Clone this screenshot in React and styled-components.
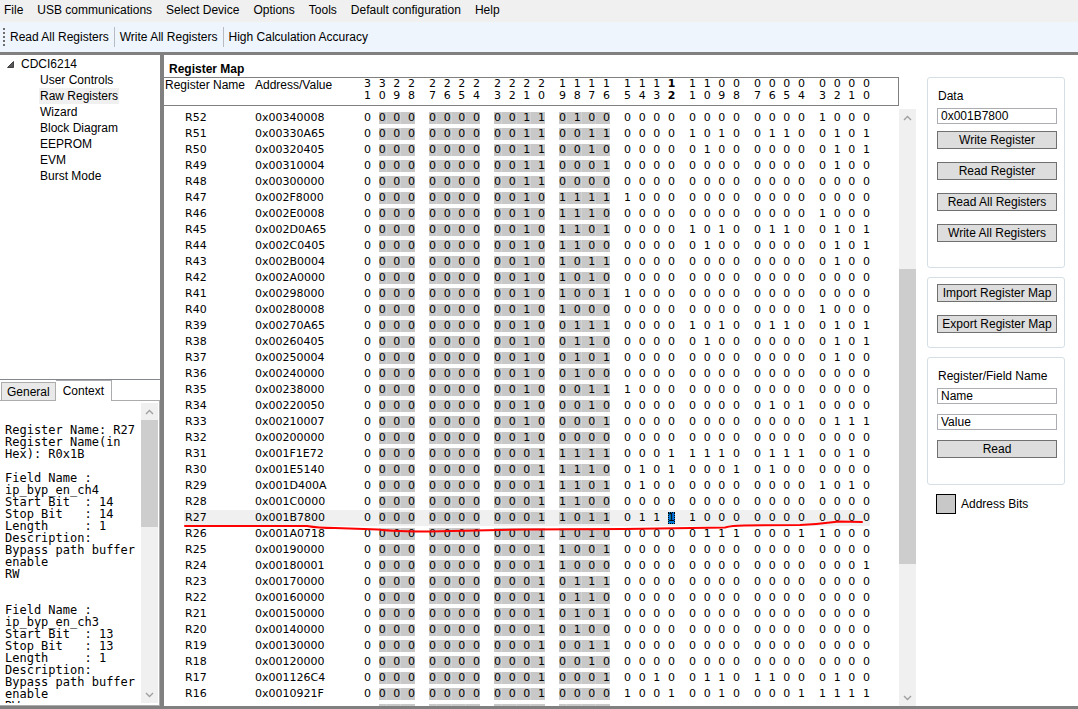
import { useState } from "react";
import styled, { createGlobalStyle } from "styled-components";

const GlobalStyle = createGlobalStyle`
  * {
    box-sizing: border-box;
  }
  body {
    margin: 0;
    background: #ffffff;
    color: #000000;
    font: 12px/16px "Liberation Sans", Arial, sans-serif;
  }
  button, input {
    font: inherit;
    color: inherit;
  }
`;

const Page = styled.div`
  display: flex;
  flex-direction: column;
  height: 100vh;
  overflow: hidden;
`;

const MenuBar = styled.nav`
  display: flex;
  flex: none;
  height: 22px;
  padding: 2px 4px 0;
  gap: 14px;
  background: #f0f0f0;
`;

const PlainButton = styled.button`
  padding: 0;
  border: 0;
  background: none;
  white-space: nowrap;
  line-height: 16px;
`;

const MenuItem = styled(PlainButton)`
  height: 16px;
`;

const ToolBar = styled.div`
  display: flex;
  flex: none;
  align-items: center;
  height: 30px;
  padding-left: 3px;
  background: #eef5fd;
`;

const Grip = styled.span`
  width: 2px;
  height: 18px;
  margin-right: 5px;
  background: repeating-linear-gradient(#6d6d6d 0 2px, transparent 2px 4px);
`;

const ToolButton = styled(PlainButton)`
  height: 20px;
  padding-right: 5px;
  & + & {
    padding-left: 5px;
    border-left: 1px solid #b8bcc2;
  }
`;

const Workspace = styled.div`
  display: flex;
  flex: 1;
  min-height: 0;
  border-top: 3px solid #808080;
  border-bottom: 3px solid #808080;
`;

const Sidebar = styled.aside`
  display: flex;
  flex: none;
  flex-direction: column;
  width: 164px;
  border-right: 4px solid #808080;
`;

const Tree = styled.div`
  flex: none;
  height: 325px;
  border-bottom: 1px solid #828790;
`;

const TreeRoot = styled.div`
  display: flex;
  align-items: center;
  height: 16px;
  margin-top: 1px;
  padding-left: 7px;
  gap: 7px;
`;

const TreeList = styled.ul`
  margin: 0;
  padding: 0 0 0 39px;
  list-style: none;
`;

const TreeItem = styled.li`
  width: fit-content;
  padding: 0 1px;
  background: ${({ $selected }) => ($selected ? "#f0f0f0" : "transparent")};
`;

const Tabs = styled.div`
  display: flex;
  flex: none;
  align-items: flex-end;
  height: 21px;
  padding-left: 1px;
  border-bottom: 1px solid #acacac;
`;

const Tab = styled(PlainButton)`
  height: ${({ $active }) => ($active ? "21px" : "18px")};
  margin-bottom: ${({ $active }) => ($active ? "-1px" : "0")};
  padding: 0 ${({ $active }) => ($active ? "7px" : "5px")};
  border: 1px solid #acacac;
  border-bottom: 0;
  border-left-width: ${({ $active }) => ($active ? "0" : "1px")};
  background: ${({ $active }) => ($active ? "#ffffff" : "#e9e9e9")};
`;

const ContextPanel = styled.div`
  display: flex;
  flex: 1;
  min-height: 0;
  padding: 2px 1px 2px 5px;
  border-right: 1px solid #acacac;
  border-bottom: 1px solid #acacac;
`;

const ContextText = styled.pre`
  flex: 1;
  margin: 0;
  padding-top: 21px;
  overflow: hidden;
  font: 12px/12px "DejaVu Sans Mono", monospace;
`;

const ScrollTrack = styled.div`
  display: flex;
  flex: none;
  flex-direction: column;
  width: 17px;
  background: #f0f0f0;
`;

const ScrollButton = styled.button`
  display: grid;
  flex: none;
  place-items: center;
  height: 17px;
  padding: 0;
  border: 0;
  background: none;
`;

const ScrollSpace = styled.div`
  flex: ${({ $grow }) => $grow} 0 0;
`;

const ScrollThumb = styled(ScrollSpace)`
  background: #cdcdcd;
`;

const Main = styled.main`
  display: flex;
  flex: 1;
  flex-direction: column;
  min-width: 0;
`;

const Title = styled.h1`
  flex: none;
  margin: 0;
  padding: 7px 0 0 5px;
  font-size: 12px;
  line-height: 15px;
`;

const MapArea = styled.div`
  display: flex;
  flex: 1;
  min-height: 0;
`;

const MapColumn = styled.section`
  display: flex;
  flex-direction: column;
  width: 752px;
`;

const HeaderBox = styled.div`
  flex: none;
  width: 735px;
  height: 29px;
  border: 1px solid #808080;
  border-left: 0;
`;

const RowsArea = styled.div`
  display: flex;
  flex: 1;
  min-height: 0;
  margin-top: 3px;
`;

const RowsView = styled.div`
  position: relative;
  flex: 1;
  padding-top: 1px;
  overflow: hidden;
`;

const RegisterTable = styled.table`
  table-layout: fixed;
  width: 720px;
  border-collapse: collapse;
  font: 11px/16px "DejaVu Sans", Verdana, sans-serif;
`;

const HeadCell = styled.th`
  padding: 0;
  font: 12px/14px "Liberation Sans", Arial, sans-serif;
  text-align: left;
  vertical-align: top;
  white-space: nowrap;
  &:first-child {
    padding-left: 1px;
  }
`;

const BitHeadCell = styled.th`
  padding: 0;
  font: 11px/12px "DejaVu Sans", Verdana, sans-serif;
  vertical-align: top;
`;

const Row = styled.tr`
  height: 16px;
  background: ${({ $selected }) =>
    $selected
      ? "linear-gradient(90deg, #ffffff 20px, #f0f0f0 20px 706px, #ffffff 706px)"
      : "none"};
`;

const NameCell = styled.td`
  padding: 0 0 0 21px;
`;

const Cell = styled.td`
  padding: 0;
`;

const Nibble = styled.div`
  display: grid;
  grid-template-columns: 7px 1fr 7px 1fr 7px 1fr 7px;
  width: 51px;
`;

const Bit = styled.span`
  height: 12px;
  line-height: 12px;
  text-align: center;
  background: ${({ $address, $selected }) =>
    $selected ? "#0078d7" : $address ? "#c8c8c8" : "none"};
  outline: ${({ $selected }) => ($selected ? "1px dotted #000000" : "none")};
  outline-offset: -1px;
`;

const Gap = styled.span`
  background: ${({ $address }) => ($address ? "#c8c8c8" : "none")};
  border-left: 1px solid ${({ $address }) => ($address ? "#d3d3d3" : "transparent")};
`;

const BitNumber = styled.span`
  display: flex;
  flex-direction: column;
  align-items: center;
  font-weight: ${({ $selected }) => ($selected ? "bold" : "normal")};
`;

const Marker = styled.svg`
  position: absolute;
  top: 400px;
  left: 20px;
  width: 680px;
  height: 26px;
`;

const Controls = styled.aside`
  display: flex;
  flex-direction: column;
  width: 138px;
  margin-left: 11px;
`;

const Group = styled.form`
  display: flex;
  flex-direction: column;
  margin-bottom: 9px;
  padding: ${({ $top }) => $top}px 7px ${({ $bottom }) => $bottom}px 9px;
  border: 1px solid #d5dfe5;
  border-radius: 3px;
`;

const FieldLabel = styled.label`
  margin-bottom: 4px;
  padding-left: 1px;
`;

const TextBox = styled.input`
  width: 100%;
  height: 16px;
  padding: 0 3px;
  border: 1px solid #abadb3;
  background: #ffffff;
  line-height: 14px;
  & + div {
    margin-top: 7px;
  }
`;

const ButtonStack = styled.div`
  display: flex;
  flex-direction: column;
  gap: 13px;
`;

const PushButton = styled.button`
  height: 18px;
  padding: 0;
  border: 1px solid #707070;
  background: #dddddd;
  line-height: 16px;
  white-space: nowrap;
`;

const Fields = styled.div`
  display: flex;
  flex-direction: column;
  gap: 10px;
`;

const Legend = styled.div`
  display: flex;
  align-items: center;
  gap: 5px;
  padding-left: 9px;
`;

const Swatch = styled.span`
  width: 20px;
  height: 20px;
  border: 1px solid #000000;
  background: #c8c8c8;
`;

const menus = [
  "File",
  "USB communications",
  "Select Device",
  "Options",
  "Tools",
  "Default configuration",
  "Help",
];

const pages = [
  "User Controls",
  "Raw Registers",
  "Wizard",
  "Block Diagram",
  "EEPROM",
  "EVM",
  "Burst Mode",
];

// registers from R52 down to R16
const values = [
  "00340008", "00330A65", "00320405", "00310004", "00300000", "002F8000",
  "002E0008", "002D0A65", "002C0405", "002B0004", "002A0000", "00298000",
  "00280008", "00270A65", "00260405", "00250004", "00240000", "00238000",
  "00220050", "00210007", "00200000", "001F1E72", "001E5140", "001D400A",
  "001C0000", "001B7800", "001A0718", "00190000", "00180001", "00170000",
  "00160000", "00150000", "00140000", "00130000", "00120000", "001126C4",
  "0010921F",
];

const contextText = `Register Name: R27
Register Name(in
Hex): R0x1B

Field Name :
ip_byp_en_ch4
Start Bit  : 14
Stop Bit   : 14
Length     : 1
Description:
Bypass path buffer
enable
RW


Field Name :
ip_byp_en_ch3
Start Bit  : 13
Stop Bit   : 13
Length     : 1
Description:
Bypass path buffer
enable
RW`;

const nibbles = [7, 6, 5, 4, 3, 2, 1, 0];
const places = [3, 2, 1, 0];

const isAddress = (bit) => bit > 15 && bit < 31;

function Columns() {
  return (
    <colgroup>
      <col style={{ width: 91 }} />
      <col style={{ width: 109 }} />
      {nibbles.map((nibble) => (
        <col key={nibble} style={{ width: 65 }} />
      ))}
    </colgroup>
  );
}

function BitCells({ digits, selectedBit, onSelect }) {
  return nibbles.map((nibble, index) => (
    <Cell key={nibble}>
      <Nibble>
        {places.map((place) => {
          const bit = nibble * 4 + place;
          const text = digits ? (parseInt(digits[index], 16) >> place) & 1 : "";
          return [
            <Bit
              key={bit}
              $address={isAddress(bit)}
              $selected={bit === selectedBit}
              onClick={() => onSelect?.(bit)}
            >
              {text}
            </Bit>,
            place > 0 && <Gap key={"gap" + bit} $address={isAddress(bit)} />,
          ];
        })}
      </Nibble>
    </Cell>
  ));
}

function ScrollBar({ before, thumb, after }) {
  return (
    <ScrollTrack>
      <ScrollButton type="button" aria-label="Scroll up">
        <svg width="9" height="6" viewBox="0 0 9 6" fill="none" stroke="#a0a0a0" strokeWidth="1.4">
          <path d="M1 5 4.5 1.5 8 5" />
        </svg>
      </ScrollButton>
      <ScrollSpace $grow={before} />
      <ScrollThumb $grow={thumb} />
      <ScrollSpace $grow={after} />
      <ScrollButton type="button" aria-label="Scroll down">
        <svg width="9" height="6" viewBox="0 0 9 6" fill="none" stroke="#a0a0a0" strokeWidth="1.4">
          <path d="M1 1 4.5 4.5 8 1" />
        </svg>
      </ScrollButton>
    </ScrollTrack>
  );
}

export default function App() {
  const [page, setPage] = useState("Raw Registers");
  const [tab, setTab] = useState("Context");
  const [selected, setSelected] = useState({ register: 27, bit: 12 });

  return (
    <Page>
      <GlobalStyle />
      <MenuBar>
        {menus.map((menu) => (
          <MenuItem key={menu} type="button">{menu}</MenuItem>
        ))}
      </MenuBar>
      <ToolBar>
        <Grip />
        <ToolButton type="button">Read All Registers</ToolButton>
        <ToolButton type="button">Write All Registers</ToolButton>
        <ToolButton type="button">High Calculation Accuracy</ToolButton>
      </ToolBar>
      <Workspace>
        <Sidebar>
          <Tree>
            <TreeRoot>
              <svg width="7" height="7" viewBox="0 0 7 7">
                <path d="M6.5 0.5V6.5H0.5Z" fill="#595959" stroke="#404040" />
              </svg>
              CDCI6214
            </TreeRoot>
            <TreeList>
              {pages.map((name) => (
                <TreeItem key={name} $selected={name === page} onClick={() => setPage(name)}>
                  {name}
                </TreeItem>
              ))}
            </TreeList>
          </Tree>
          <Tabs>
            {["General", "Context"].map((name) => (
              <Tab key={name} type="button" $active={name === tab} onClick={() => setTab(name)}>
                {name}
              </Tab>
            ))}
          </Tabs>
          <ContextPanel>
            <ContextText>{contextText}</ContextText>
            <ScrollBar before={0} thumb={107} after={159} />
          </ContextPanel>
        </Sidebar>
        <Main>
          <Title>Register Map</Title>
          <MapArea>
            <MapColumn>
              <HeaderBox>
                <RegisterTable>
                  <Columns />
                  <thead>
                    <tr>
                      <HeadCell>Register Name</HeadCell>
                      <HeadCell>Address/Value</HeadCell>
                      {nibbles.map((nibble) => (
                        <BitHeadCell key={nibble}>
                          <Nibble>
                            {places.map((place) => {
                              const bit = nibble * 4 + place;
                              const [tens, ones] = String(bit).padStart(2, "0");
                              return [
                                <BitNumber key={bit} $selected={bit === selected.bit}>
                                  <span>{tens}</span>
                                  <span>{ones}</span>
                                </BitNumber>,
                                place > 0 && <Gap key={"gap" + bit} />,
                              ];
                            })}
                          </Nibble>
                        </BitHeadCell>
                      ))}
                    </tr>
                  </thead>
                </RegisterTable>
              </HeaderBox>
              <RowsArea>
                <RowsView>
                  <RegisterTable>
                    <Columns />
                    <tbody>
                      {values.map((value, index) => {
                        const register = 52 - index;
                        const current = register === selected.register;
                        return (
                          <Row key={register} $selected={current}>
                            <NameCell>R{register}</NameCell>
                            <Cell>0x{value}</Cell>
                            <BitCells
                              digits={value}
                              selectedBit={current ? selected.bit : null}
                              onSelect={(bit) => setSelected({ register, bit })}
                            />
                          </Row>
                        );
                      })}
                      <Row>
                        <NameCell />
                        <Cell />
                        <BitCells />
                      </Row>
                    </tbody>
                  </RegisterTable>
                  <Marker viewBox="0 0 680 26" fill="none" stroke="#ff0000" strokeWidth="2" strokeLinecap="round">
                    <path d="M1 17H123Q134 19 151 19L194 20.5Q210 22.5 246 22.5Q290 21.500 340 20.5L440 20L541 18.5Q548 16.500 560 16.500L616 16Q636 15 655 12.500L678 13" />
                  </Marker>
                </RowsView>
                <ScrollBar before={143} thumb={295} after={125} />
              </RowsArea>
            </MapColumn>
            <Controls>
              <Group $top={10} $bottom={25}>
                <FieldLabel htmlFor="data">Data</FieldLabel>
                <TextBox id="data" defaultValue="0x001B7800" />
                <ButtonStack>
                  <PushButton type="button">Write Register</PushButton>
                  <PushButton type="button">Read Register</PushButton>
                  <PushButton type="button">Read All Registers</PushButton>
                  <PushButton type="button">Write All Registers</PushButton>
                </ButtonStack>
              </Group>
              <Group $top={6} $bottom={14}>
                <ButtonStack>
                  <PushButton type="button">Import Register Map</PushButton>
                  <PushButton type="button">Export Register Map</PushButton>
                </ButtonStack>
              </Group>
              <Group $top={10} $bottom={26}>
                <FieldLabel htmlFor="field-name">Register/Field Name</FieldLabel>
                <Fields>
                  <TextBox id="field-name" defaultValue="Name" />
                  <TextBox aria-label="Value" defaultValue="Value" />
                  <PushButton type="button">Read</PushButton>
                </Fields>
              </Group>
              <Legend>
                <Swatch />
                Address Bits
              </Legend>
            </Controls>
          </MapArea>
        </Main>
      </Workspace>
    </Page>
  );
}
